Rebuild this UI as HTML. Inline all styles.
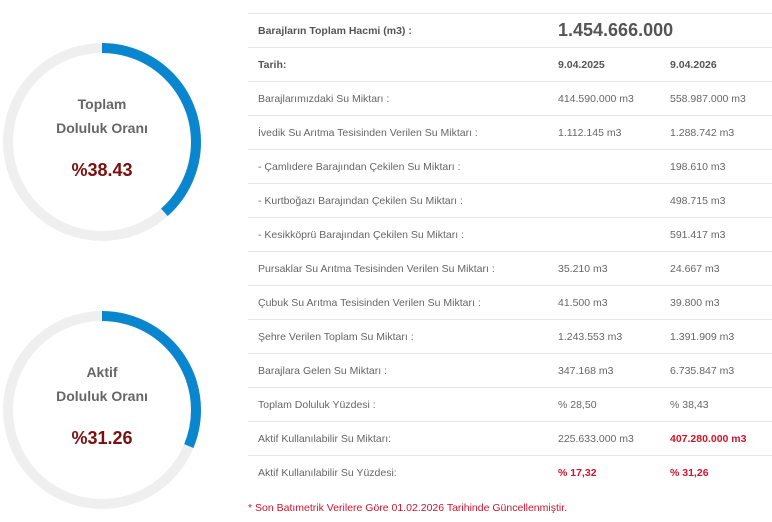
<!DOCTYPE html>
<html><head><meta charset="utf-8"><style>
body{margin:0;width:772px;height:522px;background:#fff;font-family:"Liberation Sans","DejaVu Sans",sans-serif;position:relative;overflow:hidden}
.ring{position:absolute;left:2px;width:200px;height:200px}
.rt{position:absolute;left:2px;width:200px;text-align:center;color:#666;font-weight:bold;font-size:14px;line-height:24px}
.rv{position:absolute;left:2px;width:200px;text-align:center;color:#7d0f0f;font-weight:bold;font-size:18px}
table{position:absolute;left:248px;top:13px;width:524px;border-collapse:collapse;font-size:10.5px;color:#666}
td{height:33px;border-top:1px solid #e6e6e6;padding:0;vertical-align:middle}
td:first-child{padding-left:10px;width:300px}
td:nth-child(2){width:112px}
.b{font-weight:bold;color:#555}
.r{color:#d0142c;font-weight:bold}
.note{position:absolute;left:248px;top:502px;font-size:10.5px;color:#d0142c}
</style></head><body>
<svg class="ring" style="top:42px" viewBox="0 0 200 200"><circle cx="100" cy="100" r="94" fill="none" stroke="#efefef" stroke-width="10"/><circle cx="100" cy="100" r="94" fill="none" stroke="#0a86cf" stroke-width="10" stroke-dasharray="227 600" transform="rotate(-90 100 100)"/></svg>
<div class="rt" style="top:92px">Toplam<br>Doluluk Oranı</div>
<div class="rv" style="top:160px">%38.43</div>
<svg class="ring" style="top:310px" viewBox="0 0 200 200"><circle cx="100" cy="100" r="94" fill="none" stroke="#efefef" stroke-width="10"/><circle cx="100" cy="100" r="94" fill="none" stroke="#0a86cf" stroke-width="10" stroke-dasharray="184.6 600" transform="rotate(-90 100 100)"/></svg>
<div class="rt" style="top:360px">Aktif<br>Doluluk Oranı</div>
<div class="rv" style="top:428px">%31.26</div>
<table>
<tr><td class="b">Barajların Toplam Hacmi (m3) :</td><td colspan="2" style="font-size:18px;font-weight:bold;color:#555">1.454.666.000</td></tr>
<tr><td class="b">Tarih:</td><td class="b">9.04.2025</td><td class="b">9.04.2026</td></tr>
<tr><td>Barajlarımızdaki Su Miktarı :</td><td>414.590.000 m3</td><td>558.987.000 m3</td></tr>
<tr><td>İvedik Su Arıtma Tesisinden Verilen Su Miktarı :</td><td>1.112.145 m3</td><td>1.288.742 m3</td></tr>
<tr><td>- Çamlıdere Barajından Çekilen Su Miktarı :</td><td></td><td>198.610 m3</td></tr>
<tr><td>- Kurtboğazı Barajından Çekilen Su Miktarı :</td><td></td><td>498.715 m3</td></tr>
<tr><td>- Kesikköprü Barajından Çekilen Su Miktarı :</td><td></td><td>591.417 m3</td></tr>
<tr><td>Pursaklar Su Arıtma Tesisinden Verilen Su Miktarı :</td><td>35.210 m3</td><td>24.667 m3</td></tr>
<tr><td>Çubuk Su Arıtma Tesisinden Verilen Su Miktarı :</td><td>41.500 m3</td><td>39.800 m3</td></tr>
<tr><td>Şehre Verilen Toplam Su Miktarı :</td><td>1.243.553 m3</td><td>1.391.909 m3</td></tr>
<tr><td>Barajlara Gelen Su Miktarı :</td><td>347.168 m3</td><td>6.735.847 m3</td></tr>
<tr><td>Toplam Doluluk Yüzdesi :</td><td>% 28,50</td><td>% 38,43</td></tr>
<tr><td>Aktif Kullanılabilir Su Miktarı:</td><td>225.633.000 m3</td><td class="r">407.280.000 m3</td></tr>
<tr><td>Aktif Kullanılabilir Su Yüzdesi:</td><td class="r">% 17,32</td><td class="r">% 31,26</td></tr>
</table>
<div class="note">* Son Batımetrik Verilere Göre 01.02.2026 Tarihinde Güncellenmiştir.</div>
</body></html>
